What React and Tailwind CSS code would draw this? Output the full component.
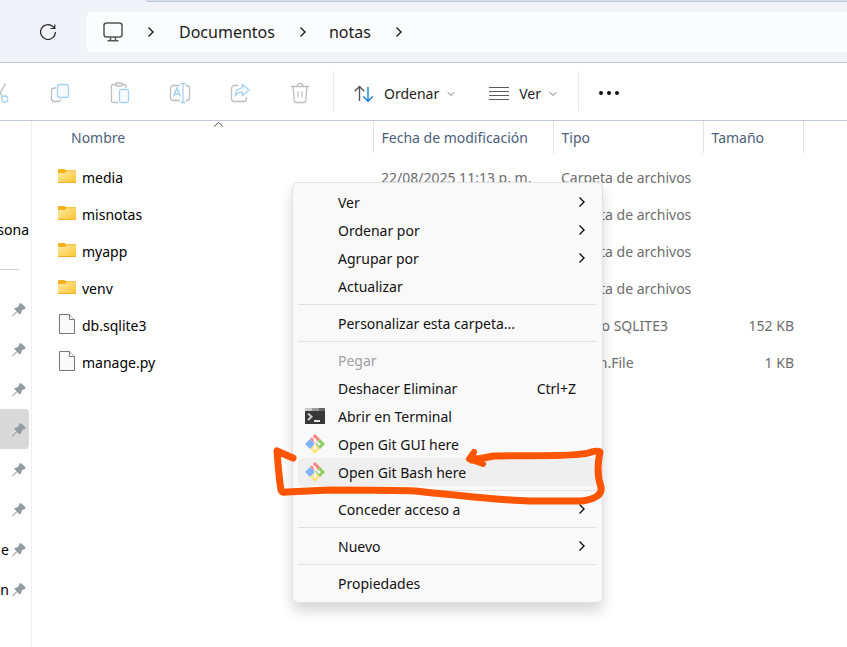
import React from "react";

function Chevron({ className }) {
  return (
    <svg className={className} viewBox="0 0 8 12" fill="none" stroke="currentColor" strokeWidth="1.4" aria-hidden="true">
      <path d="M1.5 1.5 6 6l-4.500 4.500" />
    </svg>
  );
}

function ChevronDown() {
  return (
    <svg className="h-2 w-2 text-[#777]" viewBox="0 0 8 8" fill="none" stroke="currentColor" aria-hidden="true">
      <path d="M.8 2.300 4 5.500l3.200-3.200" />
    </svg>
  );
}

function ToolIcon({ children }) {
  return (
    <svg className="h-6 w-6" viewBox="0 0 24 24" fill="none" stroke="#bdbdbd" strokeWidth="1.300" aria-hidden="true">
      {children}
    </svg>
  );
}

const BLUE = "#a5d2f3";

const tools = [
  {
    label: "Cortar",
    icon: (
      <>
        <path d="M7 2.500 14.500 16M17.500 2.500 10 16" />
        <circle cx="16.800" cy="18" r="3" stroke={BLUE} />
        <circle cx="7.200" cy="18" r="3" stroke={BLUE} />
      </>
    ),
  },
  {
    label: "Copiar",
    icon: (
      <>
        <path d="M8 7H6.500a3 3 0 0 0-3 3v7.500a3 3 0 0 0 3 3H10a3 3 0 0 0 3-2" />
        <rect x="9.500" y="3.500" width="11" height="13" rx="2.500" fill="#f8fbfe" stroke={BLUE} />
      </>
    ),
  },
  {
    label: "Pegar",
    icon: (
      <>
        <path d="M9 3.500H5A1.500 1.500 0 0 0 3.500 5v15A1.500 1.500 0 0 0 5 21.500h5M14 3.500h2.500A1.500 1.500 0 0 1 18 5v2" />
        <rect x="7.500" y="2" width="6.500" height="3" rx="1.500" />
        <rect x="11.500" y="8.500" width="9" height="13" rx="1.500" fill="#f8fbfe" stroke={BLUE} />
      </>
    ),
  },
  {
    label: "Cambiar nombre",
    icon: (
      <>
        <path d="M12 4.500H5.500a3 3 0 0 0-3 3v9a3 3 0 0 0 3 3H12M17.500 4.500h1a3 3 0 0 1 3 3v9a3 3 0 0 1-3 3h-1" />
        <path d="M12.500 2.500h5M15 2.500v19M12.500 21.500h5" stroke={BLUE} />
        <path d="m5.500 15.500 3.500-8.500 3.500 8.500M6.800 13h4.500" stroke={BLUE} strokeWidth="1.500" />
      </>
    ),
  },
  {
    label: "Compartir",
    icon: (
      <>
        <path d="M10 4.500H6.500a3 3 0 0 0-3 3v10a3 3 0 0 0 3 3h9a3 3 0 0 0 3-3V16" />
        <path d="M14.500 3.500v3.300C10 7 7.500 10 7.200 15c2-2.800 4.300-3.800 7.300-3.800v3.300l6.500-5.500Z" fill="#f8fbfe" stroke={BLUE} strokeLinejoin="round" />
      </>
    ),
  },
  {
    label: "Eliminar",
    icon: (
      <>
        <path d="M3 5.500h18M9 5.500a3 3 0 0 1 6 0M5 5.500l1.300 14A2 2 0 0 0 8.300 21.500h7.400a2 2 0 0 0 2-2L19 5.500" />
        <path d="M10 10.500v6M14 10.500v6" />
      </>
    ),
  },
];

function FolderIcon() {
  return (
    <svg className="h-[14px] w-[18px]" viewBox="0 0 18 14" aria-hidden="true">
      <defs>
        <linearGradient id="folder" x1="0" y1="0" x2="1" y2="1">
          <stop offset="0" stopColor="#ffe9a3" />
          <stop offset="1" stopColor="#fdc52f" />
        </linearGradient>
      </defs>
      <path d="M0 1a1 1 0 0 1 1-1h5.500l1.500 1.300h10V5H0Z" fill="#f3b31d" />
      <path d="M0 4h7l1.500-1.700H18V14H0Z" fill="url(#folder)" />
      <path d="M0 13.500h18" stroke="#eeb127" />
    </svg>
  );
}

function FileIcon() {
  return (
    <svg className="ml-px h-5 w-4" viewBox="0 0 16 20" fill="#f9f9f9" stroke="#767676" aria-hidden="true">
      <path d="M.5.5h10l5 5v14H.5Z" />
      <path d="M10.500.5v5h5" />
    </svg>
  );
}

function PinIcon() {
  return (
    <svg className="h-[14px] w-[14px] shrink-0" viewBox="0 0 14 14" fill="#929ca3" aria-hidden="true">
      <path d="M7.500.5c.8-.6 1.600-.3 2.200.3L13.200 4c.6.7.4 1.500-.3 1.900L10.300 7l-1.500 3.500-1.300 1-2.400-2.500L1 13.300l-.8.2.1-.9L4.600 8.300 2.300 6l.8-1.300 3-.8Z" />
    </svg>
  );
}

function TerminalIcon() {
  return (
    <svg className="h-4 w-5" viewBox="0 0 20 16" aria-hidden="true">
      <path d="M0 0h20v16H0Z" fill="#383838" />
      <path d="M0 0h7v3H0Z" fill="#c9c9c9" />
      <path d="M7 0h7v3H7Z" fill="#999" />
      <path d="M14 0h6v3h-6Z" fill="#666" />
      <path d="m3 5.500 3.500 3.300L3 12" fill="none" stroke="#ccc" strokeWidth="2" />
      <path d="M9 13h6" stroke="#fff" strokeWidth="1.800" />
    </svg>
  );
}

function GitIcon() {
  return (
    <svg className="h-5 w-5" viewBox="0 0 20 20" aria-hidden="true">
      <path d="m10 0 5 5-5 5-5-5Z" fill="#fb8484" />
      <path d="m15 5 5 5-5 5-5-5Z" fill="#8ccf66" />
      <path d="m5 5 5 5-5 5-5-5Z" fill="#80b3ff" />
      <path d="m10 10 5 5-5 5-5-5Z" fill="#ffe27d" />
      <path d="m7 2.500 3 3v9.500M10 6l4 4" stroke="#f9f9f9" strokeWidth="1.300" fill="none" />
      <circle cx="10" cy="6" r="1.600" fill="#f9f9f9" />
      <circle cx="14" cy="10" r="1.600" fill="#f9f9f9" />
      <circle cx="10" cy="14.300" r="1.600" fill="#f9f9f9" />
    </svg>
  );
}

const files = [
  { name: "media", folder: true, date: "22/08/2025 11:13 p. m.", type: "Carpeta de archivos" },
  { name: "misnotas", folder: true, type: "Carpeta de archivos" },
  { name: "myapp", folder: true, type: "Carpeta de archivos" },
  { name: "venv", folder: true, type: "Carpeta de archivos" },
  { name: "db.sqlite3", type: "Archivo SQLITE3", size: "152 KB" },
  { name: "manage.py", type: "Python.File", size: "1 KB" },
];

const menuGroups = [
  [
    { label: "Ver", sub: true },
    { label: "Ordenar por", sub: true },
    { label: "Agrupar por", sub: true },
    { label: "Actualizar" },
  ],
  [{ label: "Personalizar esta carpeta..." }],
  [
    { label: "Pegar", disabled: true },
    { label: "Deshacer Eliminar", shortcut: "Ctrl+Z" },
    { label: "Abrir en Terminal", icon: <TerminalIcon /> },
    { label: "Open Git GUI here", icon: <GitIcon /> },
    { label: "Open Git Bash here", icon: <GitIcon />, active: true },
  ],
  [{ label: "Conceder acceso a", sub: true }],
  [{ label: "Nuevo", sub: true }],
  [{ label: "Propiedades" }],
];

function MenuItem({ item }) {
  return (
    <button
      type="button"
      role="menuitem"
      disabled={item.disabled}
      className={`flex h-7 w-full items-center rounded-sm pr-[11px] text-left text-[#111] disabled:text-[#a0a0a0] ${item.active ? "bg-[#efefef]" : ""}`}
    >
      <span className="flex w-10 shrink-0 pl-[7px]">{item.icon}</span>
      <span className="flex-1 pt-[2px] whitespace-nowrap">{item.label}</span>
      {item.shortcut && <span className="pt-[2px] pr-[10px]">{item.shortcut}</span>}
      {item.sub && <Chevron className="h-3 w-2" />}
    </button>
  );
}

function ContextMenu() {
  return (
    <div className="absolute top-[182px] left-[292px] w-[311px]">
      <div role="menu" className="rounded-md border border-[#e2e2e2] bg-[#f9f9f9] p-[5px] shadow-[0_8px_14px_rgba(0,0,0,0.16)]">
        {menuGroups.map((group, i) => (
          <React.Fragment key={i}>
            {i > 0 && <hr className="my-1 border-[#e2e2e2]" />}
            {group.map((item) => (
              <MenuItem key={item.label} item={item} />
            ))}
          </React.Fragment>
        ))}
      </div>
      <svg
        className="pointer-events-none absolute top-[260px] left-[-20px] h-[65px] w-[340px]"
        viewBox="272 442 340 65"
        fill="none"
        stroke="#ff5500"
        strokeLinecap="round"
        strokeLinejoin="round"
        aria-hidden="true"
      >
        <path d="M293 458 277 451C278 465 279 478 281 490Q282 493 286 492L330 490C365 490 395 490 415 491C455 495 495 500 530 501H582Q603 498 601 487C597 476 597 466 600 452Q597 450 588 453C575 457 525 455 494 456L472 460" strokeWidth="7" />
        <path d="M474 452 469 459 483 464" fill="#ff5500" strokeWidth="6" />
      </svg>
    </div>
  );
}

function Sidebar() {
  const pinned = ["", "", "", "", "", "", "e", "an"];
  return (
    <aside className="w-8 shrink-0 overflow-hidden border-r border-[#f0f0f0] text-black">
      <div className="mt-[89px] mr-[2px] flex h-10 items-center justify-end">sona</div>
      <hr className="mt-[19px] mr-3 mb-[19px] border-[#d0d0d0]" />
      <ul>
        {pinned.map((text, i) => (
          <li key={i} className={`mr-[2px] flex h-10 items-center justify-end gap-[3px] rounded-r-sm pt-px pr-[3px] ${i === 3 ? "bg-[#d9d9d9]" : ""}`}>
            <span>{text}</span>
            <PinIcon />
          </li>
        ))}
      </ul>
    </aside>
  );
}

function FileTable() {
  return (
    <table className="w-full table-fixed self-start text-left text-[#6d6d6d]">
      <colgroup>
        <col className="w-[341px]" />
        <col className="w-[180px]" />
        <col className="w-[150px]" />
        <col className="w-[100px]" />
        <col />
      </colgroup>
      <thead className="text-[#4c607a]">
        <tr className="h-8">
          <th className="relative pt-[2px] pl-[39px] font-normal">
            Nombre
            <svg className="absolute top-0 left-[181px] h-2 w-[11px]" viewBox="0 0 11 8" fill="none" stroke="#555" aria-hidden="true">
              <path d="m1 5.500 4.500-4 4.500 4" />
            </svg>
          </th>
          <th className="border-l border-[#e2e2e2] pt-[2px] pl-2 font-normal">Fecha de modificación</th>
          <th className="border-l border-[#e2e2e2] pt-[2px] pl-2 font-normal">Tipo</th>
          <th className="border-l border-[#e2e2e2] pt-[2px] pl-2 font-normal">Tamaño</th>
          <td className="border-l border-[#e2e2e2]" />
        </tr>
      </thead>
      <tbody className="before:block before:h-[6px]">
        {files.map((f) => (
          <tr key={f.name} className="h-[37px] whitespace-nowrap">
            <td className="text-black">
              <span className="flex items-center pl-[26px]">
                <span className="flex w-6 pb-[3px]">{f.folder ? <FolderIcon /> : <FileIcon />}</span>
                {f.name}
              </span>
            </td>
            <td className="pl-2">{f.date}</td>
            <td className="pl-2">{f.type}</td>
            <td className="pr-[9px] text-right">{f.size}</td>
            <td />
          </tr>
        ))}
      </tbody>
    </table>
  );
}

export default function App() {
  return (
    <div className="relative flex min-h-screen flex-col overflow-hidden bg-white font-['Noto_Sans','Open_Sans',sans-serif] text-sm">
      <header className="border-b border-[#c0cadb] bg-[#f2f3f8]">
        <div className="ml-[146px] h-[2px] rounded-bl-sm border-b border-[#bcc7da] bg-[#d8deeb]" />
        <div className="flex h-[60px] items-center">
          <button type="button" aria-label="Actualizar" className="flex w-[86px] justify-center pl-[10px]">
            <svg className="h-4 w-4" viewBox="0 0 16 16" fill="none" stroke="#222" strokeWidth="1.200" aria-hidden="true">
              <path d="M15.400 8A7.400 7.400 0 1 1 13 2.600l1.800 1.700M14.800.5v4h-4.300" />
            </svg>
          </button>
          <nav aria-label="Ruta" className="flex h-10 flex-1 items-center rounded-l-md bg-[#fbfcfe] pl-[17px] text-base text-[#1b1b1b]">
            <svg className="h-5 w-5" viewBox="0 0 20 20" fill="none" stroke="#555" strokeWidth="1.500" aria-hidden="true">
              <rect x="1" y="1" width="18" height="14" rx="2.500" />
              <path d="M7.500 15v3.500M12.500 15v3.500M4.500 18.700h11" />
            </svg>
            <Chevron className="mx-6 h-3 w-2" />
            <a href="#documentos" className="mr-6">Documentos</a>
            <Chevron className="mr-[22px] h-3 w-2" />
            <a href="#notas" className="mr-6">notas</a>
            <Chevron className="h-3 w-2" />
          </nav>
        </div>
      </header>

      <div role="toolbar" className="flex h-[58px] items-center border-b border-[#c0cadb] pb-px pr-4 text-[#1b1b1b]">
        <div className="-ml-[30px] flex">
          {tools.map((t) => (
            <button key={t.label} type="button" aria-label={t.label} className="flex w-[60px] justify-center pt-1">
              <ToolIcon>{t.icon}</ToolIcon>
            </button>
          ))}
        </div>
        <div className="ml-[3px] h-10 w-px bg-[#e8e8e8]" />
        <button type="button" className="ml-5 flex items-center gap-2 pt-[6px]">
          <svg className="mr-[2px] h-5 w-5" viewBox="0 0 20 20" fill="none" strokeWidth="1.400" aria-hidden="true">
            <path d="M5.500 17V2.500M.7 7.300l4.800-4.800 4.800 4.800" stroke="#555" />
            <path d="M14 3v14M9.300 12.500 14 17.200l4.800-4.800" stroke="#0f7fdb" />
          </svg>
          Ordenar
          <ChevronDown />
        </button>
        <button type="button" className="ml-[34px] flex items-center gap-2 pt-[6px]">
          <svg className="mr-[2px] h-[14px] w-5" viewBox="0 0 20 14" stroke="#5a5a5a" aria-hidden="true">
            <path d="M0 .5h20M0 4.500h20M0 8.500h20M0 12.500h20" />
          </svg>
          Ver
          <ChevronDown />
        </button>
        <div className="ml-[21px] h-10 w-px bg-[#e8e8e8]" />
        <button type="button" aria-label="Ver más" className="ml-5 flex gap-1 pt-[3px]">
          <svg className="h-1 w-5" viewBox="0 0 20 4" fill="#111" aria-hidden="true">
            <circle cx="2" cy="2" r="2" />
            <circle cx="10" cy="2" r="2" />
            <circle cx="18" cy="2" r="2" />
          </svg>
        </button>
      </div>

      <main className="flex flex-1">
        <Sidebar />
        <FileTable />
      </main>

      <ContextMenu />
    </div>
  );
}
